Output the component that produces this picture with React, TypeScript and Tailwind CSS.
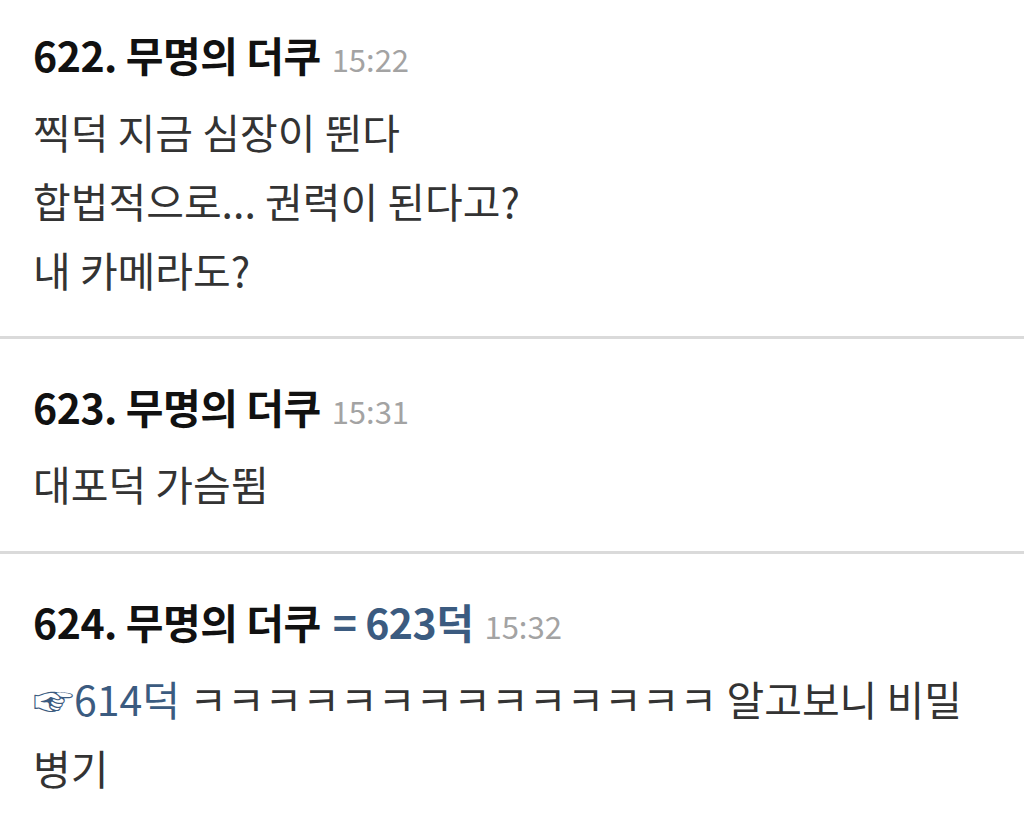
import React from "react";

const font = { fontFamily: '"Noto Sans CJK KR", "Noto Sans", sans-serif' };

function Header({ no, time, ref }: { no: string; time: string; ref?: string }) {
  return (
    <div className="flex items-baseline h-[52px] leading-[52px] whitespace-nowrap">
      <span className="text-[41px] font-bold text-[#111] tracking-[-0.5px]">{no}. 무명의 더쿠</span>
      {ref && <span className="ml-[12px] text-[41px] font-bold text-[#3b5b80] tracking-[-0.5px]">= {ref}</span>}
      <span className="ml-[11px] text-[31px] text-[#a3a3a3]">{time}</span>
    </div>
  );
}

function Section({ first, children }: { first?: boolean; children: React.ReactNode }) {
  return (
    <div className={(first ? "pt-[28px] pb-[32px]" : "pt-[41px] pb-[33px]") + " px-[33px]"}>{children}</div>
  );
}

export default function App() {
  return (
    <div className="w-[1024px] h-[826px] bg-white overflow-hidden" style={font}>
      <Section first>
        <Header no="622" time="15:22" />
        <div className="mt-[17px] text-[41px] leading-[69px] text-[#333]">
          <div>찍덕 지금 심장이 뛴다</div>
          <div>합법적으로... 권력이 된다고?</div>
          <div>내 카메라도?</div>
        </div>
      </Section>
      <div className="h-[3px] bg-[#dadada]" />
      <Section>
        <Header no="623" time="15:31" />
        <div className="mt-[17px] text-[41px] leading-[69px] text-[#333]">
          <div>대포덕 가슴뜀</div>
        </div>
      </Section>
      <div className="h-[3px] bg-[#dadada]" />
      <Section>
        <Header no="624" time="15:32" ref="623덕" />
        <div className="mt-[17px] text-[41px] leading-[69px] text-[#333] break-keep">
          <div>
            <span className="text-[#3b5b80]">☞614덕</span> ㅋㅋㅋㅋㅋㅋㅋㅋㅋㅋㅋㅋㅋㅋ 알고보니 비밀 병기
          </div>
        </div>
      </Section>
    </div>
  );
}
